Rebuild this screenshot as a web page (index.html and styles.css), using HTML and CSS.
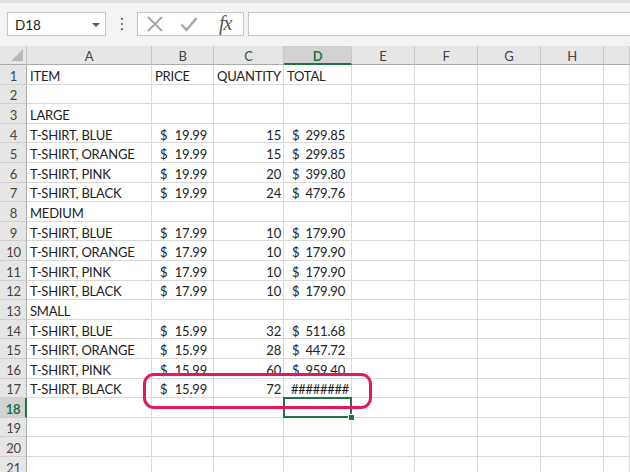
FILE: index.html
```html
<!DOCTYPE html>
<html>
<head>
<meta charset="utf-8">
<link rel="stylesheet" href="styles.css">
</head>
<body>
<div class="app">
  <div class="toolbar">
    <div class="namebox"><span>D18</span><span class="caret"></span></div>
    <div class="dots"><i></i><i></i><i></i></div>
    <div class="fbtns">
      <svg class="ico" width="18" height="18" viewBox="0 0 18 18"><path d="M2 2 L16 16 M16 2 L2 16" stroke="#a6a6a6" stroke-width="2" fill="none"/></svg>
      <svg class="ico" width="18" height="18" viewBox="0 0 18 18"><path d="M1.5 9.5 L6.5 15 L16.5 3" stroke="#a6a6a6" stroke-width="2.4" fill="none"/></svg>
      <span class="fx">fx</span>
    </div>
    <div class="finput"></div>
  </div>
  <div class="sheet">
    <div class="corner"><span class="tri"></span></div>
    <div class="ch">A</div><div class="ch">B</div><div class="ch">C</div><div class="ch sel">D</div><div class="ch">E</div><div class="ch">F</div><div class="ch">G</div><div class="ch">H</div><div class="ch"></div>

    <div class="rh">1</div><div class="c">ITEM</div><div class="c">PRICE</div><div class="c">QUANTITY</div><div class="c">TOTAL</div><div class="c"></div><div class="c"></div><div class="c"></div><div class="c"></div><div class="c"></div>
    <div class="rh">2</div><div class="c"></div><div class="c"></div><div class="c"></div><div class="c"></div><div class="c"></div><div class="c"></div><div class="c"></div><div class="c"></div><div class="c"></div>
    <div class="rh">3</div><div class="c">LARGE</div><div class="c"></div><div class="c"></div><div class="c"></div><div class="c"></div><div class="c"></div><div class="c"></div><div class="c"></div><div class="c"></div>
    <div class="rh">4</div><div class="c">T-SHIRT, BLUE</div><div class="c cur"><span>$</span><span>19.99</span></div><div class="c num">15</div><div class="c cur tot"><span>$</span><span>299.85</span></div><div class="c"></div><div class="c"></div><div class="c"></div><div class="c"></div><div class="c"></div>
    <div class="rh">5</div><div class="c">T-SHIRT, ORANGE</div><div class="c cur"><span>$</span><span>19.99</span></div><div class="c num">15</div><div class="c cur tot"><span>$</span><span>299.85</span></div><div class="c"></div><div class="c"></div><div class="c"></div><div class="c"></div><div class="c"></div>
    <div class="rh">6</div><div class="c">T-SHIRT, PINK</div><div class="c cur"><span>$</span><span>19.99</span></div><div class="c num">20</div><div class="c cur tot"><span>$</span><span>399.80</span></div><div class="c"></div><div class="c"></div><div class="c"></div><div class="c"></div><div class="c"></div>
    <div class="rh">7</div><div class="c">T-SHIRT, BLACK</div><div class="c cur"><span>$</span><span>19.99</span></div><div class="c num">24</div><div class="c cur tot"><span>$</span><span>479.76</span></div><div class="c"></div><div class="c"></div><div class="c"></div><div class="c"></div><div class="c"></div>
    <div class="rh">8</div><div class="c">MEDIUM</div><div class="c"></div><div class="c"></div><div class="c"></div><div class="c"></div><div class="c"></div><div class="c"></div><div class="c"></div><div class="c"></div>
    <div class="rh">9</div><div class="c">T-SHIRT, BLUE</div><div class="c cur"><span>$</span><span>17.99</span></div><div class="c num">10</div><div class="c cur tot"><span>$</span><span>179.90</span></div><div class="c"></div><div class="c"></div><div class="c"></div><div class="c"></div><div class="c"></div>
    <div class="rh">10</div><div class="c">T-SHIRT, ORANGE</div><div class="c cur"><span>$</span><span>17.99</span></div><div class="c num">10</div><div class="c cur tot"><span>$</span><span>179.90</span></div><div class="c"></div><div class="c"></div><div class="c"></div><div class="c"></div><div class="c"></div>
    <div class="rh">11</div><div class="c">T-SHIRT, PINK</div><div class="c cur"><span>$</span><span>17.99</span></div><div class="c num">10</div><div class="c cur tot"><span>$</span><span>179.90</span></div><div class="c"></div><div class="c"></div><div class="c"></div><div class="c"></div><div class="c"></div>
    <div class="rh">12</div><div class="c">T-SHIRT, BLACK</div><div class="c cur"><span>$</span><span>17.99</span></div><div class="c num">10</div><div class="c cur tot"><span>$</span><span>179.90</span></div><div class="c"></div><div class="c"></div><div class="c"></div><div class="c"></div><div class="c"></div>
    <div class="rh">13</div><div class="c">SMALL</div><div class="c"></div><div class="c"></div><div class="c"></div><div class="c"></div><div class="c"></div><div class="c"></div><div class="c"></div><div class="c"></div>
    <div class="rh">14</div><div class="c">T-SHIRT, BLUE</div><div class="c cur"><span>$</span><span>15.99</span></div><div class="c num">32</div><div class="c cur tot"><span>$</span><span>511.68</span></div><div class="c"></div><div class="c"></div><div class="c"></div><div class="c"></div><div class="c"></div>
    <div class="rh">15</div><div class="c">T-SHIRT, ORANGE</div><div class="c cur"><span>$</span><span>15.99</span></div><div class="c num">28</div><div class="c cur tot"><span>$</span><span>447.72</span></div><div class="c"></div><div class="c"></div><div class="c"></div><div class="c"></div><div class="c"></div>
    <div class="rh">16</div><div class="c">T-SHIRT, PINK</div><div class="c cur"><span>$</span><span>15.99</span></div><div class="c num">60</div><div class="c cur tot"><span>$</span><span>959.40</span></div><div class="c"></div><div class="c"></div><div class="c"></div><div class="c"></div><div class="c"></div>
    <div class="rh">17</div><div class="c">T-SHIRT, BLACK</div><div class="c cur"><span>$</span><span>15.99</span></div><div class="c num">72</div><div class="c hash">########</div><div class="c"></div><div class="c"></div><div class="c"></div><div class="c"></div><div class="c"></div>
    <div class="rh sel">18</div><div class="c"></div><div class="c"></div><div class="c"></div><div class="c active"><span class="handle"></span></div><div class="c"></div><div class="c"></div><div class="c"></div><div class="c"></div><div class="c"></div>
    <div class="rh">19</div><div class="c"></div><div class="c"></div><div class="c"></div><div class="c"></div><div class="c"></div><div class="c"></div><div class="c"></div><div class="c"></div><div class="c"></div>
    <div class="rh">20</div><div class="c"></div><div class="c"></div><div class="c"></div><div class="c"></div><div class="c"></div><div class="c"></div><div class="c"></div><div class="c"></div><div class="c"></div>
    <div class="rh">21</div><div class="c"></div><div class="c"></div><div class="c"></div><div class="c"></div><div class="c"></div><div class="c"></div><div class="c"></div><div class="c"></div><div class="c"></div>

    <div class="highlight"></div>
  </div>
</div>
</body>
</html>
```

FILE: styles.css
```css
* { box-sizing: border-box; }
html, body { margin: 0; padding: 0; }
body {
  width: 630px;
  height: 472px;
  overflow: hidden;
  background: #ffffff;
  font-family: Lato, "Liberation Sans", sans-serif;
  color: #222;
}
.app { width: 630px; height: 472px; overflow: hidden; }

.toolbar {
  height: 46px;
  background: #f3f3f3;
  border-top: 3px solid #e1e1e1;
  display: flex;
  align-items: flex-start;
  padding-top: 9px;
  padding-left: 7px;
}
.namebox {
  width: 99px;
  height: 24px;
  background: #fff;
  border: 1px solid #c6c6c6;
  display: flex;
  align-items: center;
  justify-content: space-between;
  padding: 1px 5px 0 7px;
  font-size: 13.5px;
  color: #222;
}
.caret {
  width: 0; height: 0;
  border-left: 4px solid transparent;
  border-right: 4px solid transparent;
  border-top: 4px solid #555;
}
.dots {
  width: 31px;
  height: 24px;
  display: flex;
  flex-direction: column;
  align-items: center;
  justify-content: center;
  gap: 3px;
}
.dots i { width: 2px; height: 2px; background: #777; display: block; }
.fbtns {
  width: 107px;
  height: 24px;
  background: #fff;
  border: 1px solid #c6c6c6;
  display: flex;
  align-items: center;
  padding-left: 8px;
}
.fbtns .ico { display: block; }
.fbtns .ico:nth-child(2) { margin-left: 16px; }
.fx {
  margin-left: 21px;
  font-family: "Liberation Serif", serif;
  font-style: italic;
  font-size: 20px;
  color: #5a5a5a;
  letter-spacing: -1px;
  line-height: 1;
  margin-top: -2px;
}
.finput {
  margin-left: 4px;
  flex: 1;
  height: 24px;
  background: #fff;
  border: 1px solid #c6c6c6;
  border-right: none;
}

.sheet {
  position: relative;
  display: grid;
  grid-template-columns: 27px 125px 62px 70px 68px 63px 63px 63px 63px 1fr;
  grid-template-rows: 19px repeat(21, 19.6px);
  font-size: 13px;
  letter-spacing: -0.2px;
}
.corner {
  background: #e6e6e6;
  border-right: 1px solid #c4c4c4;
  border-bottom: 1px solid #ababab;
  position: relative;
}
.tri {
  position: absolute;
  right: 3px;
  bottom: 3px;
  width: 0; height: 0;
  border-left: 12px solid transparent;
  border-bottom: 12px solid #b8b8b8;
}
.ch {
  background: #e6e6e6;
  border-right: 1px solid #c8c8c8;
  border-bottom: 1px solid #ababab;
  display: flex;
  align-items: center;
  justify-content: center;
  color: #444;
  padding-top: 1px;
}
.ch.sel {
  background: #d2d2d2;
  color: #217346;
  font-weight: bold;
  border-bottom: 2px solid #217346;
  padding-top: 2px;
}
.rh {
  background: #e6e6e6;
  border-right: 1px solid #ababab;
  border-bottom: 1px solid #cfcfcf;
  display: flex;
  align-items: center;
  justify-content: center;
  color: #444;
  padding: 3px 0 0 1px;
}
.rh.sel {
  background: #d2d2d2;
  color: #217346;
  font-weight: bold;
  border-right: 2px solid #217346;
}
.c {
  border-right: 1px solid #d9d9d9;
  border-bottom: 1px solid #d9d9d9;
  display: flex;
  align-items: center;
  padding: 3px 3px 0 3px;
  white-space: nowrap;
  overflow: hidden;
  color: #222;
}
.c.cur { justify-content: space-between; padding-left: 8px; padding-right: 6px; }
.c.num { justify-content: flex-end; padding-right: 2px; }
.c.hash { justify-content: flex-end; padding-right: 2px; letter-spacing: -0.3px; }
.c.active {
  position: relative;
  overflow: visible;
  border: 2px solid #217346;
  margin: -1px 0 0 -1px;
}
.handle {
  position: absolute;
  right: -5px;
  bottom: -5px;
  width: 7px;
  height: 7px;
  background: #217346;
  border: 1px solid #fff;
}
.highlight {
  position: absolute;
  left: 143px;
  top: 327px;
  width: 229px;
  height: 36px;
  border: 3.5px solid #e2195c;
  border-radius: 11px;
  pointer-events: none;
}
```
